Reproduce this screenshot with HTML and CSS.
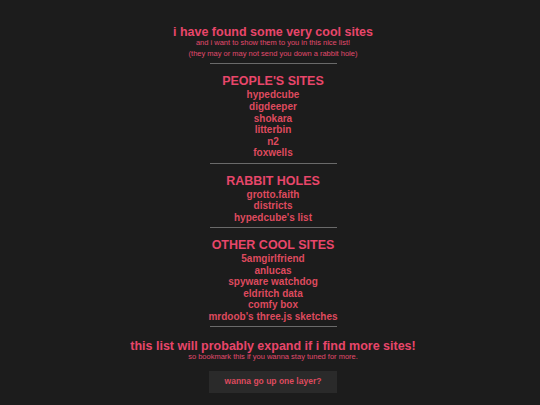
FILE: index.html
```html
<!DOCTYPE html>
<html>
<head>
<meta charset="utf-8">
<title>cool sites</title>
<link rel="stylesheet" href="styles.css">
</head>
<body>
<main class="page">
  <h1 class="title">i have found some very cool sites</h1>
  <p class="sub">and i want to show them to you in this nice list!<br>(they may or may not send you down a rabbit hole)</p>
  <hr class="rule rule-top">

  <h2 class="section">PEOPLE'S SITES</h2>
  <ul class="links">
    <li><a href="#">hypedcube</a></li>
    <li><a href="#">digdeeper</a></li>
    <li><a href="#">shokara</a></li>
    <li><a href="#">litterbin</a></li>
    <li><a href="#">n2</a></li>
    <li><a href="#">foxwells</a></li>
  </ul>
  <hr class="rule">

  <h2 class="section">RABBIT HOLES</h2>
  <ul class="links">
    <li><a href="#">grotto.faith</a></li>
    <li><a href="#">districts</a></li>
    <li><a href="#">hypedcube's list</a></li>
  </ul>
  <hr class="rule">

  <h2 class="section">OTHER COOL SITES</h2>
  <ul class="links">
    <li><a href="#">5amgirlfriend</a></li>
    <li><a href="#">anlucas</a></li>
    <li><a href="#">spyware watchdog</a></li>
    <li><a href="#">eldritch data</a></li>
    <li><a href="#">comfy box</a></li>
    <li><a href="#">mrdoob's three.js sketches</a></li>
  </ul>
  <hr class="rule">

  <h1 class="title title-end">this list will probably expand if i find more sites!</h1>
  <p class="sub">so bookmark this if you wanna stay tuned for more.</p>

  <a class="button" href="#">wanna go up one layer?</a>
</main>
</body>
</html>
```

FILE: styles.css
```css
html, body {
  margin: 0;
  padding: 0;
  background: #1c1c1c;
}

body {
  font-family: "Liberation Sans", Arial, sans-serif;
  color: #e6466a;
}

.page {
  display: flex;
  flex-direction: column;
  align-items: center;
  padding: 27px 0 0 6px;
  text-align: center;
}

.title {
  margin: 0;
  font-size: 12.5px;
  font-weight: bold;
  line-height: 10px;
  color: #e8466a;
}

.title-end {
  margin-top: 13.5px;
}

.sub {
  margin: 0;
  font-size: 7.5px;
  line-height: 11.2px;
  font-weight: normal;
  color: #e04a6c;
}

.rule {
  width: 127px;
  height: 0;
  margin: 3.6px 0 0 0;
  border: 0;
  border-top: 1.5px solid #6a6a6a;
}

.rule-top {
  margin-top: 4px;
}

.section {
  margin: 10px 0 0 0;
  font-size: 12.5px;
  font-weight: bold;
  line-height: 15px;
  color: #e8466a;
}

.links {
  list-style: none;
  margin: 0;
  padding: 0;
}

.links li {
  font-size: 10px;
  line-height: 11.6px;
  font-weight: bold;
}

.links a {
  color: #de4a5e;
  text-decoration: none;
}

.button {
  display: block;
  width: 128px;
  margin-top: 9.5px;
  padding: 5px 0 5.5px;
  background: #2a2a2a;
  color: #de4a5e;
  font-size: 8.5px;
  line-height: 11.5px;
  font-weight: bold;
  text-decoration: none;
  text-align: center;
}
```
